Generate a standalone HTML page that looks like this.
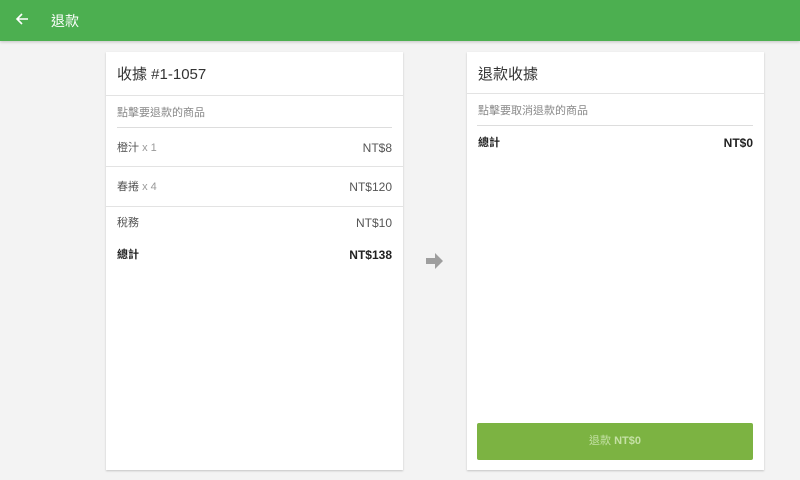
<!DOCTYPE html>
<html><head><meta charset="utf-8"><style>
*{margin:0;padding:0;box-sizing:border-box}
body{width:800px;height:480px;background:#f3f3f3;font-family:"Liberation Sans","Noto Sans CJK TC",sans-serif;position:relative;overflow:hidden;color:#333}
.hdr{position:absolute;left:0;top:0;width:800px;height:41px;background:#4caf50;box-shadow:0 1px 3px rgba(0,0,0,.2)}
.hdr .t{position:absolute;left:51px;top:11px;color:#fff;font-size:14px;line-height:20px}
.card{position:absolute;top:52px;width:297px;height:418px;background:#fff;box-shadow:0 1px 2px rgba(0,0,0,.2)}
.abs{position:absolute}
.ttl{font-size:15px;color:#333;line-height:20px}
.sub{font-size:11px;color:#888;line-height:16px}
.row{font-size:11px;color:#555;line-height:16px}
.num{font-size:12px}
.b{font-weight:bold;color:#222}
.hl{position:absolute;height:1px;background:#e3e3e3}
</style></head><body>
<div class="hdr">
<svg class="abs" style="left:15px;top:12px" width="14" height="14" viewBox="0 0 14 14"><path d="M13 7H2M7 2L2 7l5 5" stroke="#fff" stroke-width="1.6" fill="none"/></svg>
<div class="t">退款</div></div>

<div class="card" style="left:106px">
<div class="abs ttl" style="left:11px;top:13px">收據 #1-1057</div>
<div class="hl" style="left:0;right:0;top:43px"></div>
<div class="abs sub" style="left:11px;top:53px">點擊要退款的商品</div>
<div class="hl" style="left:11px;right:11px;top:75px;background:#ddd"></div>
<div class="abs row" style="left:11px;top:88px">橙汁 <span style="color:#999">x 1</span></div>
<div class="abs row num" style="right:11px;top:88px">NT$8</div>
<div class="hl" style="left:0;right:0;top:114px"></div>
<div class="abs row" style="left:11px;top:127px">春捲 <span style="color:#999">x 4</span></div>
<div class="abs row num" style="right:11px;top:127px">NT$120</div>
<div class="hl" style="left:0;right:0;top:154px"></div>
<div class="abs row" style="left:11px;top:163px">稅務</div>
<div class="abs row num" style="right:11px;top:163px">NT$10</div>
<div class="abs row b" style="left:11px;top:195px">總計</div>
<div class="abs row b num" style="right:11px;top:195px">NT$138</div>
</div>

<svg class="abs" style="left:426px;top:253px" width="18" height="16" viewBox="0 0 18 16"><path d="M0 5h9V0l8 8-8 8v-5H0z" fill="#9e9e9e"/></svg>

<div class="card" style="left:467px">
<div class="abs ttl" style="left:11px;top:13px">退款收據</div>
<div class="hl" style="left:0;right:0;top:41px"></div>
<div class="abs sub" style="left:11px;top:51px">點擊要取消退款的商品</div>
<div class="hl" style="left:10px;right:11px;top:73px;background:#ddd"></div>
<div class="abs row b" style="left:11px;top:83px">總計</div>
<div class="abs row b num" style="right:11px;top:83px">NT$0</div>
<div class="abs" style="left:10px;top:371px;width:276px;height:37px;background:#7cb342;border-radius:2px;color:#c5e1a5;font-size:11px;text-align:center;line-height:37px">退款 <b>NT$0</b></div>
</div>
</body></html>
